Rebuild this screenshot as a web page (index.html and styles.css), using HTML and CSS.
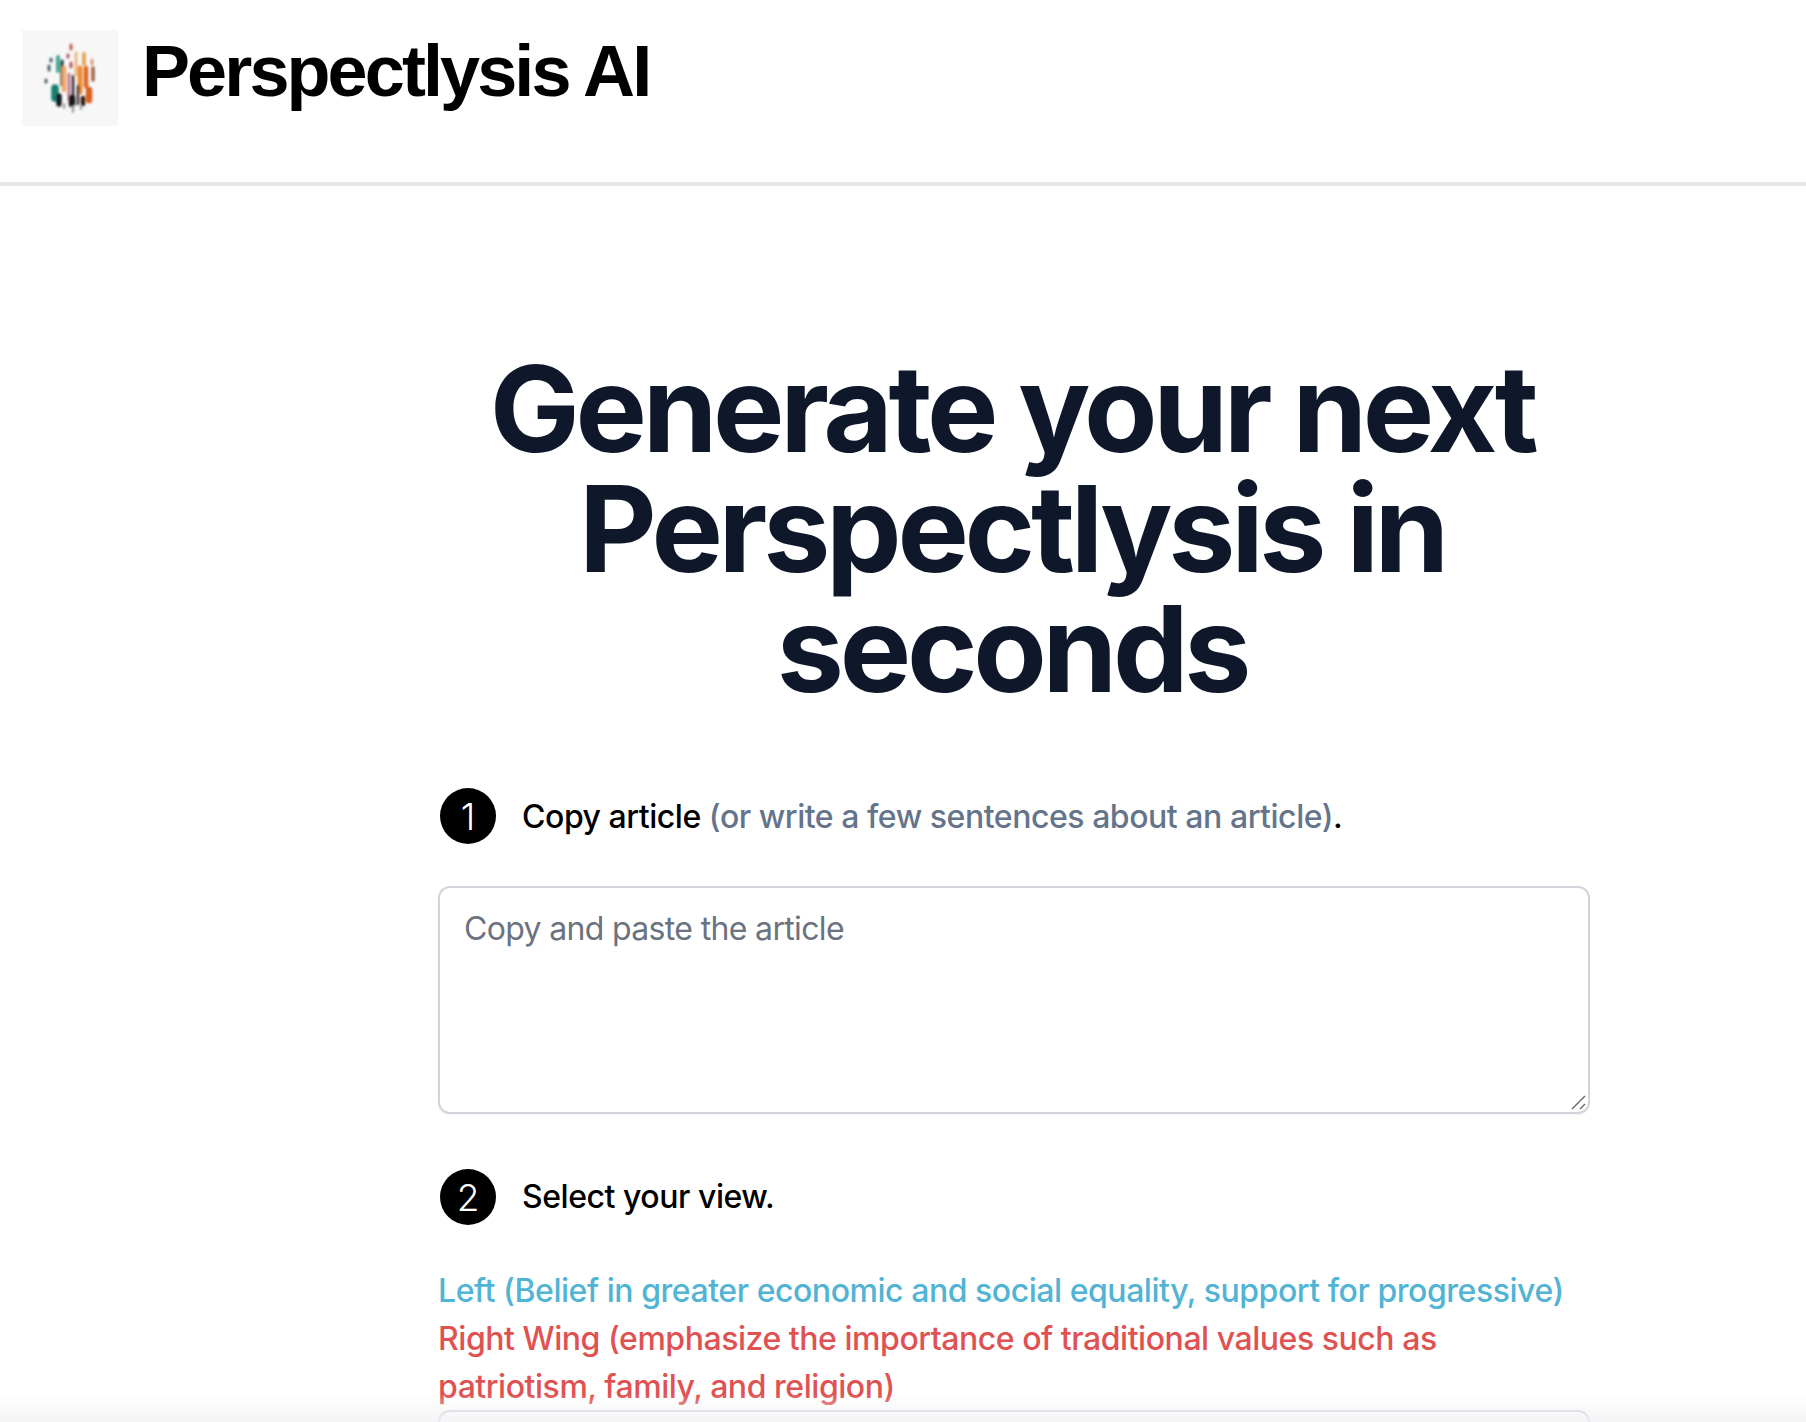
FILE: index.html
```html
<!DOCTYPE html>
<html lang="en">
<head>
<meta charset="utf-8">
<title>Perspectlysis AI</title>
<link rel="stylesheet" href="styles.css">
</head>
<body>
<header class="site-header">
  <div class="logo">
    <svg viewBox="0 0 96 96" width="96" height="96" aria-hidden="true">
      <defs><filter id="soft" x="-20%" y="-20%" width="140%" height="140%"><feGaussianBlur stdDeviation="1"/></filter></defs>
      <rect width="96" height="96" fill="#f7f7f7"/>
      <g filter="url(#soft)" stroke-linecap="round" fill="none">
        <path d="M49 15v4" stroke="#c8604f" stroke-width="3"/>
        <path d="M36 27v14" stroke="#45a893" stroke-width="4"/>
        <path d="M40 31v24" stroke="#1f2a33" stroke-width="3"/>
        <path d="M29 29v2M27 36v4M24 50v2" stroke="#4a6470" stroke-width="3"/>
        <path d="M46 25v2M49 33v4" stroke="#b4545c" stroke-width="3"/>
        <path d="M54 23v22" stroke="#ecc090" stroke-width="3.5"/>
        <path d="M62 24v10" stroke="#e2a45c" stroke-width="4"/>
        <path d="M70 30v4" stroke="#d3a07d" stroke-width="3"/>
        <path d="M71 38v12" stroke="#a0634a" stroke-width="3.5"/>
        <path d="M42 38v22" stroke="#efa868" stroke-width="4.5"/>
        <path d="M47 44v26" stroke="#c07890" stroke-width="3"/>
        <path d="M51 46v22" stroke="#1e1b24" stroke-width="2.4"/>
        <path d="M58 38v24" stroke="#ee8a30" stroke-width="5"/>
        <path d="M64 38v18" stroke="#e0661f" stroke-width="4.5"/>
        <path d="M56 56v18" stroke="#3a2c2c" stroke-width="2.4"/>
        <path d="M33 58v10" stroke="#14806f" stroke-width="7.5"/>
        <path d="M37 66v8" stroke="#141e27" stroke-width="5.5"/>
        <path d="M50 68v6" stroke="#171413" stroke-width="6.5"/>
        <path d="M61 68v6" stroke="#2e1a17" stroke-width="4.5"/>
        <path d="M67 60v10" stroke="#dc5f1e" stroke-width="6.5"/>
        <path d="M42 74v4M51 76v6M59 76v3" stroke="#9a9292" stroke-width="2"/>
      </g>
    </svg>
  </div>
  <h2 class="brand">Perspectlysis AI</h2>
</header>
<main class="content">
  <h1 class="headline">Generate your next Perspectlysis in seconds</h1>
  <form class="form">
    <div class="step step-first">
      <span class="badge">1</span>
      <p class="step-text">Copy article <span class="muted">(or write a few sentences about an article)</span>.</p>
    </div>
    <div class="field">
      <textarea class="article" placeholder="Copy and paste the article"></textarea>
      <svg class="grip" viewBox="0 0 16 16" width="16" height="16" aria-hidden="true"><path d="M1 14 L14 1 M9 14 L14 9" stroke="#666" stroke-width="1.4" fill="none"/></svg>
    </div>
    <div class="step step-second">
      <span class="badge">2</span>
      <p class="step-text">Select your view.</p>
    </div>
    <div class="views">
      <p class="left">Left (Belief in greater economic and social equality, support for progressive)</p>
      <p class="right">Right Wing (emphasize the importance of traditional values such as patriotism, family, and religion)</p>
    </div>
    <div class="select"></div>
  </form>
</main>
<div class="fade"></div>
</body>
</html>
```
FILE: styles.css
```css
* { box-sizing: border-box; }
html, body { margin: 0; height: 100%; }
body { height: 1422px; overflow: hidden; background: #fff; font-family: "Inter", "Liberation Sans", sans-serif; position: relative; }
.site-header { height: 186px; border-bottom: 4px solid #e5e7eb; padding: 30px 22px 0; display: flex; align-items: flex-start; gap: 24px; }
.logo { width: 96px; height: 96px; flex: none; }
.logo svg { display: block; }
.brand { margin: 1px 0 0; font-family: "Liberation Sans", sans-serif; font-weight: 700; font-size: 72px; line-height: 80px; letter-spacing: -2.9px; color: #000; white-space: nowrap; }
.content { padding: 163px 0 0 222px; display: flex; flex-direction: column; align-items: center; }
.headline { margin: 0 4px 0 0; width: 1152px; text-align: center; font-size: 120px; line-height: 120px; font-weight: 700; letter-spacing: -4.3px; color: #0f172a; }
.form { width: 1152px; display: flex; flex-direction: column; }
.step { display: flex; align-items: center; gap: 26px; padding-left: 2px; }
.step-first { margin-top: 79px; }
.step-first .step-text { margin-top: 2px; }
.step-second { margin-top: 55px; }
.badge { width: 56px; height: 56px; border-radius: 50%; background: #000; color: #fff; font-weight: 300; font-size: 37px; letter-spacing: 0; display: flex; align-items: center; justify-content: center; flex: none; }
.step-text { margin: 0; font-size: 32px; line-height: 48px; font-weight: 540; letter-spacing: -.46px; color: #000; }
.muted { color: #64748b; }
.field { position: relative; margin-top: 42px; }
.article { display: block; width: 100%; height: 228px; border: 2px solid #d1d5db; border-radius: 12px; padding: 21px 24px; font: 400 32px/40px "Inter", sans-serif; letter-spacing: -.66px; color: #111; resize: none; outline: none; background: #fff; box-shadow: 0 1px 2px rgba(0,0,0,.05); }
.article::placeholder { color: #6b7280; opacity: 1; }
.grip { position: absolute; right: 3px; bottom: 3px; }
.views { margin-top: 42px; font-size: 32px; line-height: 48px; font-weight: 540; letter-spacing: -.46px; }
.views p { margin: 0; }
.left { color: #52b4d4; }
.right { color: #e05252; }
.select { height: 80px; margin-top: -1px; border: 2px solid #d1d5db; border-radius: 12px; background: #fff; }
.fade { position: absolute; left: 0; right: 0; bottom: 0; height: 28px; background: linear-gradient(rgba(240,241,243,0), rgba(240,241,243,.75)); }
```
